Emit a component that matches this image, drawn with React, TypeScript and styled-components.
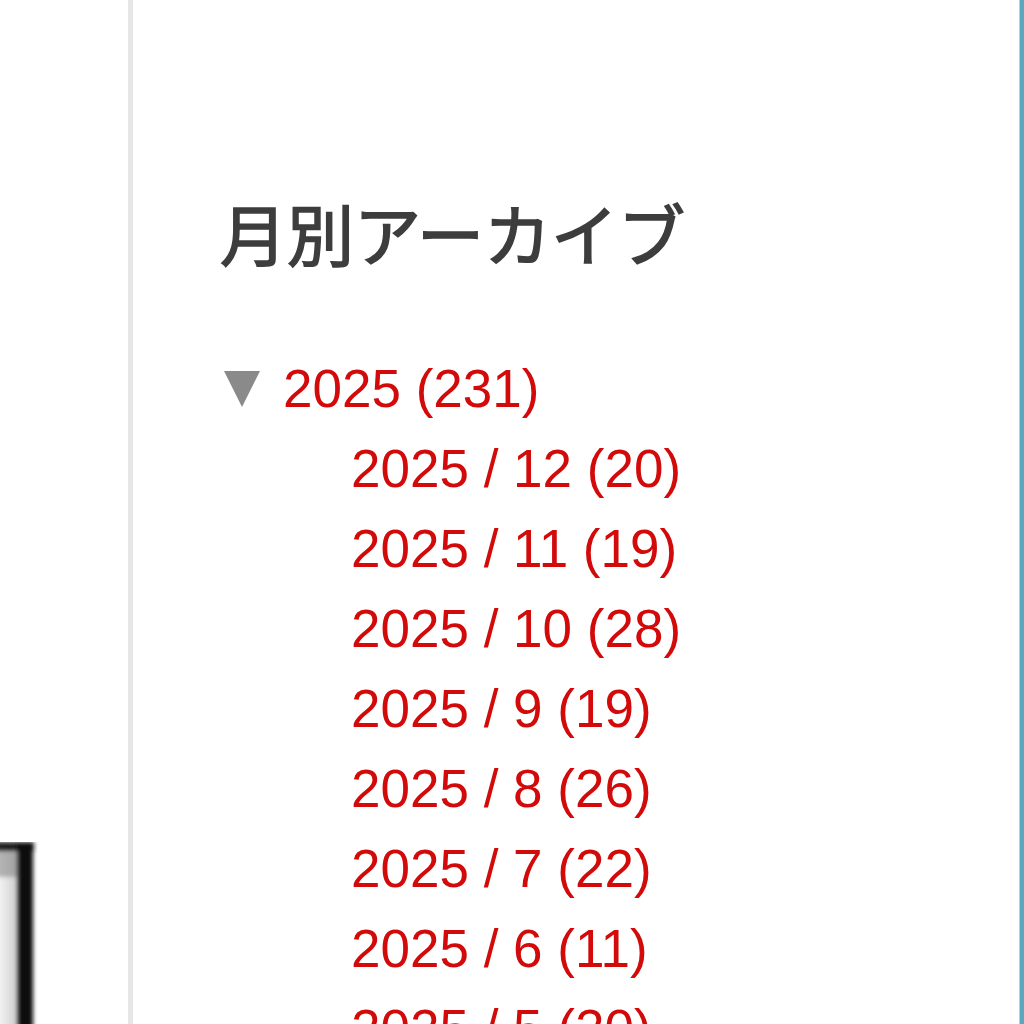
import React from "react";
import styled, { createGlobalStyle } from "styled-components";

const Global = createGlobalStyle`
  html, body {
    margin: 0;
    padding: 0;
    background: #ffffff;
  }
  #root {
    min-height: 100vh;
  }
`;

const Page = styled.div`
  display: flex;
  width: 1024px;
  height: 1024px;
  overflow: hidden;
  background: #ffffff;
`;

const LeftColumn = styled.div`
  width: 128px;
  flex: none;
  display: flex;
  flex-direction: column;
  justify-content: flex-end;
`;

const Divider = styled.div`
  width: 5px;
  flex: none;
  background: #e6e6e6;
`;

const Sidebar = styled.aside`
  flex: 1;
  padding: 192px 0 0 87px;
  border-right: 4px solid #5aa7bf;
  box-shadow: inset -1px 0 0 #a9d2de;
`;

const Heading = styled.h2`
  margin: 0;
  font-family: "Noto Sans CJK JP", "Noto Sans", sans-serif;
  font-weight: 400;
  font-size: 67px;
  line-height: 80px;
  color: #3d3d3d;
  -webkit-text-stroke: 1.6px #3d3d3d;
  letter-spacing: 0;
`;

const YearList = styled.ul`
  list-style: none;
  margin: 77px 0 0;
  padding: 0;
  font-family: "Liberation Sans", Arial, sans-serif;
  font-size: 53px;
  line-height: 80px;
`;

const YearRow = styled.li`
  display: flex;
  align-items: center;
  gap: 23px;
  padding-left: 4px;
`;

const Toggle = styled.span`
  width: 0;
  height: 0;
  border-left: 18px solid transparent;
  border-right: 18px solid transparent;
  border-top: 36px solid #8a8a8a;
`;

const ArchiveLink = styled.a`
  color: #d20a0a;
  text-decoration: none;
`;

const MonthList = styled.ul`
  list-style: none;
  margin: 0;
  padding: 0 0 0 131px;
  line-height: 80px;
`;

const MonthRow = styled.li`
  white-space: nowrap;
`;

const Bracket = styled.svg`
  display: block;
  width: 60px;
  height: 182px;
`;

const months: [number, number][] = [
  [12, 20],
  [11, 19],
  [10, 28],
  [9, 19],
  [8, 26],
  [7, 22],
  [6, 11],
  [5, 20],
];

export default function App() {
  return (
    <Page>
      <Global />
      <LeftColumn>
        <Bracket viewBox="0 0 60 182" aria-hidden="true">
          <defs>
            <filter id="soft" x="-50%" y="-50%" width="200%" height="200%">
              <feGaussianBlur stdDeviation="2.2" />
            </filter>
            <linearGradient id="fade" x1="0" y1="0" x2="1" y2="0">
              <stop offset="0" stopColor="#f4f4f4" />
              <stop offset="1" stopColor="#9a9a9a" />
            </linearGradient>
          </defs>
          <g filter="url(#soft)">
            <rect x="-4" y="10" width="24" height="180" fill="url(#fade)" opacity="0.55" />
            <rect x="-4" y="0" width="38" height="9" fill="#1a1a1a" />
            <rect x="17" y="0" width="16" height="190" fill="#111111" />
            <rect x="-4" y="9" width="22" height="26" fill="#777777" opacity="0.5" />
          </g>
        </Bracket>
      </LeftColumn>
      <Divider />
      <Sidebar>
        <Heading>月別アーカイブ</Heading>
        <YearList>
          <YearRow>
            <Toggle />
            <ArchiveLink href="#">2025 (231)</ArchiveLink>
          </YearRow>
          <li>
            <MonthList>
              {months.map(([m, n]) => (
                <MonthRow key={m}>
                  <ArchiveLink href="#">
                    2025 / {m} ({n})
                  </ArchiveLink>
                </MonthRow>
              ))}
            </MonthList>
          </li>
        </YearList>
      </Sidebar>
    </Page>
  );
}
